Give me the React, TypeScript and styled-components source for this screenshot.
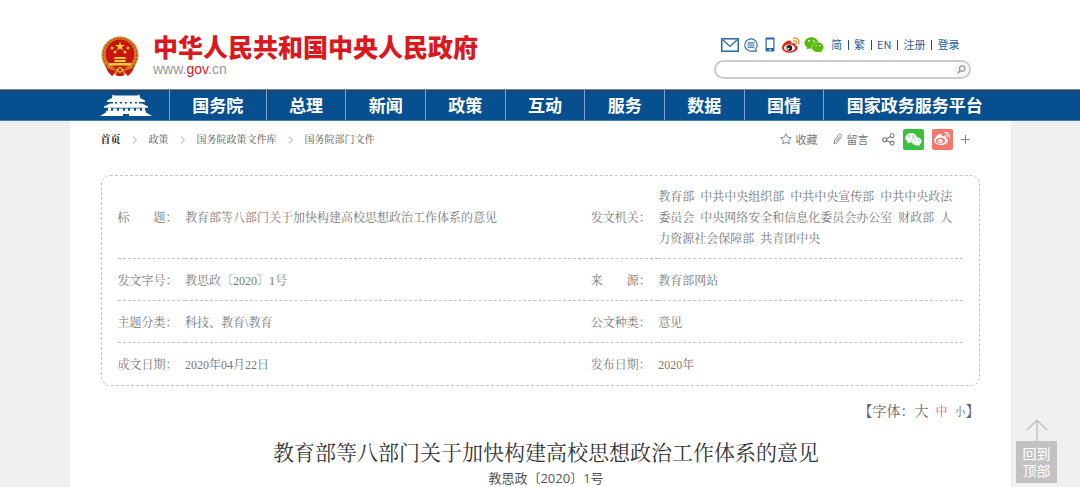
import React from 'react';
import styled, { createGlobalStyle } from 'styled-components';
import { FaWeixin, FaWeibo } from 'react-icons/fa';

const sans = '"Noto Sans CJK SC", sans-serif';
const song = '"Liberation Serif", "Noto Serif CJK SC", "Noto Sans CJK SC", serif';

const GlobalStyle = createGlobalStyle`
  * { box-sizing: border-box; }
  body { margin: 0; background: #fff; font-family: ${sans}; overflow-x: hidden; }
  a { color: inherit; text-decoration: none; }
  svg { display: block; flex: none; }
`;

const Header = styled.header`
  display: flex;
  justify-content: space-between;
  max-width: 940px;
  height: 89px;
  margin: 0 auto;
  padding: 34px 39px 0 31px;
`;
const Brand = styled.a`
  display: flex;
  align-items: flex-start;
  gap: 14px;
  svg { margin-top: 2px; }
`;
const BrandText = styled.div`
  display: flex;
  flex-direction: column;
  color: #d9191e;
`;
const BrandName = styled.strong`
  font: 900 25px/28px "Liberation Sans", ${sans};
  white-space: nowrap;
`;
const BrandUrl = styled.span`
  font: 14px/14px "Liberation Sans", sans-serif;
  color: #999;
  em { font-style: normal; color: #d9191e; }
`;
const Tools = styled.div`
  display: flex;
  flex-direction: column;
  gap: 7px;
  width: 257px;
  padding-top: 2px;
`;
const ToolLinks = styled.div`
  display: flex;
  align-items: center;
  height: 17px;
  padding-left: 7px;
  font-size: 11px;
  line-height: 17px;
  color: #1f5f9c;
  white-space: nowrap;
`;
const IconLink = styled.a<{ $gap: number }>`
  display: flex;
  margin-right: ${(p) => p.$gap}px;
`;
const Divider = styled.span`
  width: 1px;
  height: 10px;
  margin: 0 5px 0 6px;
  background: #1f4f80;
`;
const Search = styled.form`
  display: flex;
  align-items: center;
  height: 19px;
  border: 2px solid #ccc;
  border-radius: 10px;
  background: #fff;
`;
const SearchInput = styled.input`
  flex: 1;
  min-width: 0;
  height: 15px;
  padding: 0 8px;
  border: 0;
  outline: 0;
  background: transparent;
  font-size: 11px;
`;
const SearchButton = styled.button`
  display: grid;
  place-items: center;
  width: 16px;
  height: 15px;
  padding: 0;
  border: 0;
  border-radius: 8px;
  background: #f5f5f5;
`;

const NavBar = styled.nav`
  background: linear-gradient(#1b436b, #07508f 4px, #07508f);
  border-top: 1px solid #7d8a96;
  border-bottom: 1px solid #3f7fb8;
`;
const NavInner = styled.div`
  display: flex;
  max-width: 940px;
  height: 30px;
  margin: 0 auto;
  padding: 0 5px 0 30px;
`;
const NavHome = styled.a`
  display: flex;
  width: 69px;
  padding-top: 4px;
`;
const NavItem = styled.a`
  flex: 1 1 auto;
  border-left: 1px solid #7fa6cc;
  color: #fff;
  font-size: 17px;
  font-weight: 700;
  line-height: 30px;
  text-align: center;
  white-space: nowrap;
`;

const Backdrop = styled.div`
  background: #f0f0f0;
  min-height: calc(100vh - 121px);
`;
const Page = styled.main`
  max-width: 941px;
  min-height: calc(100vh - 121px);
  margin: 0 auto;
  padding: 0 31px;
  background: #fff;
`;
const TopRow = styled.div`
  display: flex;
  justify-content: space-between;
  align-items: center;
  height: 36px;
`;
const Crumbs = styled.nav`
  display: flex;
  align-items: center;
  gap: 11px;
  padding-top: 1px;
  font: 10px/20px ${song};
  color: #555;
  strong { color: #222; }
`;
const Actions = styled.div`
  display: flex;
  align-items: center;
  padding-right: 10px;
  font-size: 11px;
  color: #777;
`;
const Action = styled.button<{ $gap: number }>`
  display: flex;
  align-items: center;
  gap: 4px;
  margin: 0 ${(p) => p.$gap}px 0 0;
  padding: 0;
  border: 0;
  background: none;
  color: inherit;
  font: inherit;
`;
const Share = styled(Action)<{ $color: string }>`
  justify-content: center;
  width: 21px;
  height: 21px;
  border-radius: 2px;
  background: ${(p) => p.$color};
  color: #fff;
`;

const InfoBox = styled.section`
  margin-top: 18px;
  padding: 0 16px;
  border: 1px dashed #c4c4c4;
  border-radius: 9px;
`;
const InfoTable = styled.table`
  width: 100%;
  table-layout: fixed;
  border-collapse: collapse;
  font: 12px/21px ${song};
  color: #777;
  tr + tr { height: 42px; border-top: 1px dashed #c4c4c4; }
`;
const Label = styled.th`
  width: 8%;
  padding: 11px 0 8px;
  font-weight: 400;
  text-align: left;
  white-space: nowrap;
`;
const Value = styled.td<{ $width: number }>`
  width: ${(p) => p.$width}%;
  padding: 11px 0 8px;
`;

const FontSizer = styled.div`
  display: flex;
  justify-content: flex-end;
  align-items: center;
  margin-top: 16px;
  font: 14px/20px ${song};
  color: #666;
`;
const SizeButton = styled.button<{ $size: number; $active?: boolean }>`
  margin: 0 7px 0 0;
  padding: 0;
  border: 0;
  background: none;
  color: ${(p) => (p.$active ? '#ff3c86' : '#666')};
  font: ${(p) => p.$size}px/20px ${song};
  &:last-of-type { margin-right: 0; }
`;
const Article = styled.article`
  padding: 16px 0 0 12px;
  text-align: center;
`;
const Title = styled.h1`
  margin: 0;
  color: #333;
  font: 400 21px/30px ${song};
`;
const DocNumber = styled.p`
  margin: 0;
  color: #555;
  font: 13px/20px "Open Sans", ${sans};
`;
const BackToTop = styled.a`
  position: fixed;
  right: 23px;
  bottom: 4px;
  display: flex;
  flex-direction: column;
  align-items: center;
  color: #c2c2c2;
  span {
    width: 41px;
    padding: 4px 6px;
    background: #c2c2c2;
    color: #fff;
    font-size: 14px;
    line-height: 17px;
    text-align: center;
  }
`;

const Emblem = () => (
  <svg width="38" height="41" viewBox="0 0 38 41" aria-hidden="true">
    <circle cx="19" cy="19" r="18.5" fill="#cf8f2c" />
    <circle cx="19" cy="19" r="16.600" fill="none" stroke="#c0521e" strokeWidth="1.600" strokeDasharray="2 1.4" />
    <circle cx="19" cy="18" r="14.500" fill="#cb1212" />
    <path d="M19 5.500l1.200 3.500h3.600l-2.900 2.200 1.100 3.400-3-2.100-3 2.100 1.100-3.400-2.900-2.200h3.600z" fill="#f6cf2f" />
    <g fill="#f6cf2f">
      <circle cx="11" cy="12" r="1.500" /><circle cx="14" cy="16" r="1.500" />
      <circle cx="24" cy="16" r="1.500" /><circle cx="27" cy="12" r="1.500" />
      <path d="M14 21h10l1.500 2H12.500zM13.500 24h11v2h-11zM8 27h22v2.500H8z" />
    </g>
    <path d="M4 29q7 5 15 2.500q8 2.500 15-2.500l-3 7-4 4-3-3-2 3h-6l-2-3-3 3-4-4z" fill="#c51a14" />
    <path d="M6 31l8 3M32 31l-8 3M14 39l2-6M24 39l-2-6" stroke="#e2ae35" strokeWidth="1.300" fill="none" />
    <circle cx="19" cy="34" r="3" fill="#d6a12c" /><circle cx="19" cy="34" r="1.200" fill="#c51a14" />
  </svg>
);

const Gate = () => (
  <svg width="52" height="22" viewBox="0 0 52 22" fill="#fff" aria-hidden="true">
    <path d="M12.500 .5l2 1h23l2-1 .5 3.500 5 2.500v1.500H7V6.500L12 4z" />
    <path d="M13 8h2v2h-2zM17 8h3v2h-3zM22 8h3v2h-3zM27 8h3v2h-3zM32 8h3v2h-3zM37 8h2v2h-2z" />
    <path d="M10 9.500h32l6 3v1.200H4v-1.200z" />
    <path d="M8 13.700h3V17H8zM13 14.500h4V17h-4zM19 14.500h4V17h-4zM25 14.500h3V17h-3zM30 14.500h4V17h-4zM36 14.500h4V17h-4zM42 13.700h3V17h-3z" />
    <path d="M6 16.800h40v1.700l6 3.500H29v-2h-6v2H0l6-3.500z" />
  </svg>
);

const MailIcon = () => (
  <svg width="18" height="14" viewBox="0 0 18 14" fill="none" stroke="#2368a5" strokeWidth="1.500">
    <rect x=".8" y=".8" width="16.400" height="12.400" /><path d="M2 2l7 6.500L16 2" strokeWidth="1.200" />
  </svg>
);
const ChatIcon = () => (
  <svg width="14" height="14" viewBox="0 0 14 14" fill="none" stroke="#2f70aa" strokeWidth="1.200">
    <path d="M13.200 7A6.200 6.200 0 1 0 7 13.200h5.200l-.6-2A6.200 6.200 0 0 0 13.200 7z" /><path d="M3.500 4.800h7M3.500 7h7M3.500 9.200h7" />
  </svg>
);
const PhoneIcon = () => (
  <svg width="10" height="15" viewBox="0 0 10 15">
    <rect x=".5" y=".5" width="9" height="14" rx="1" fill="#2368a5" /><path d="M1.700 2.500h6.600v8.500H1.700z" fill="#fff" />
    <circle cx="5" cy="12.800" r=".9" fill="#fff" />
  </svg>
);
const WeiboColor = () => (
  <svg width="18" height="16" viewBox="0 0 18 16">
    <path d="M7 3.500C3.500 4 0 7.500 0 10.700 0 13.800 3.800 15.800 7.500 15.800c4.600 0 8.200-2.600 8.200-5 0-1.600-1.300-2.300-2.500-2.600.7-2-.8-3-3.800-1.800.5-2-.5-3.100-2.400-2.900z" fill="#dc2a25" />
    <ellipse cx="7.500" cy="10.900" rx="5.500" ry="3.500" fill="#fff" />
    <circle cx="7.300" cy="11" r="2.900" fill="#222" /><circle cx="6.300" cy="11.700" r="1" fill="#fff" />
    <path d="M11.500 1.200C15 .4 17.700 3 16.800 6.800M12 3.900c1.800-.3 2.700.7 2.300 2.300" fill="none" stroke="#ef9a3c" strokeWidth="1.500" strokeLinecap="round" />
  </svg>
);
const SearchIcon = () => (
  <svg width="9" height="9" viewBox="0 0 9 9" fill="none" stroke="#999" strokeWidth="1.200">
    <circle cx="5.200" cy="3.600" r="2.700" /><path d="M3.200 5.500L.8 8.200" strokeWidth="1.600" />
  </svg>
);
const Chevron = () => (
  <svg width="6" height="8" viewBox="0 0 6 8" fill="none" stroke="#aaa"><path d="M1 .8L4.500 4 1 7.200" /></svg>
);
const StarIcon = () => (
  <svg width="12" height="12" viewBox="0 0 12 12" fill="none" stroke="#888" strokeLinejoin="round">
    <path d="M6 .8l1.600 3.400 3.700.5-2.700 2.600.7 3.700L6 9.200 2.700 11l.7-3.700L.7 4.700l3.700-.5z" />
  </svg>
);
const PencilIcon = () => (
  <svg width="10" height="12" viewBox="0 0 10 12" fill="none" stroke="#888" strokeLinejoin="round">
    <path d="M1.200 10.800l.4-3.500L6 1.300c.9-1 3.400.7 2.700 2L4.300 9.300zM6.800 3.500L3.300 8.300" />
  </svg>
);
const ShareIcon = () => (
  <svg width="13" height="13" viewBox="0 0 13 13" fill="none" stroke="#777" strokeWidth="1.100">
    <circle cx="2.700" cy="6.800" r="2" /><circle cx="10.200" cy="2.700" r="1.900" /><circle cx="10.200" cy="10.300" r="1.900" />
    <path d="M4.500 5.800l4-2.200M4.500 7.600l4 1.900" />
  </svg>
);
const PlusIcon = () => (
  <svg width="9" height="9" viewBox="0 0 9 9" stroke="#888"><path d="M4.500 0v9M0 4.500h9" /></svg>
);
const ArrowUp = () => (
  <svg width="22" height="22" viewBox="0 0 22 22" fill="none" stroke="currentColor" strokeWidth="1.500">
    <path d="M11 22V1.500M.8 11.200L11 1.200l10.200 10" />
  </svg>
);

const navItems = ['国务院', '总理', '新闻', '政策', '互动', '服务', '数据', '国情', '国家政务服务平台'];
const languages = ['简', '繁', 'EN', '注册', '登录'];
const crumbs = ['首页', '政策', '国务院政策文件库', '国务院部门文件'];
const agencies = ['教育部', '中共中央组织部', '中共中央宣传部', '中共中央政法委员会', '中央网络安全和信息化委员会办公室', '财政部', '人力资源社会保障部', '共青团中央'];
const rows = [
  ['标\u3000\u3000题：', '教育部等八部门关于加快构建高校思想政治工作体系的意见', '发文机关：', agencies.join('\u2002')],
  ['发文字号：', '教思政〔2020〕1号', '来\u3000\u3000源：', '教育部网站'],
  ['主题分类：', '科技、教育\\教育', '公文种类：', '意见'],
  ['成文日期：', '2020年04月22日', '发布日期：', '2020年'],
];

export default function App() {
  return (
    <>
      <GlobalStyle />
      <Header>
        <Brand href="#">
          <Emblem />
          <BrandText>
            <BrandName>中华人民共和国中央人民政府</BrandName>
            <BrandUrl>www.<em>gov</em>.cn</BrandUrl>
          </BrandText>
        </Brand>
        <Tools>
          <ToolLinks>
            <IconLink href="#" $gap={5} aria-label="邮箱"><MailIcon /></IconLink>
            <IconLink href="#" $gap={7} aria-label="消息"><ChatIcon /></IconLink>
            <IconLink href="#" $gap={7} aria-label="客户端"><PhoneIcon /></IconLink>
            <IconLink href="#" $gap={4} aria-label="微博"><WeiboColor /></IconLink>
            <IconLink href="#" $gap={7} aria-label="微信"><FaWeixin size={20} color="#58b80c" /></IconLink>
            {languages.map((name, i) => (
              <React.Fragment key={name}>
                {i > 0 && <Divider />}
                <a href="#">{name}</a>
              </React.Fragment>
            ))}
          </ToolLinks>
          <Search>
            <SearchInput type="text" aria-label="搜索" />
            <SearchButton type="button" aria-label="搜索"><SearchIcon /></SearchButton>
          </Search>
        </Tools>
      </Header>
      <NavBar>
        <NavInner>
          <NavHome href="#" aria-label="首页"><Gate /></NavHome>
          {navItems.map((name) => <NavItem href="#" key={name}>{name}</NavItem>)}
        </NavInner>
      </NavBar>
      <Backdrop>
        <Page>
          <TopRow>
            <Crumbs>
              {crumbs.map((name, i) => (
                <React.Fragment key={name}>
                  {i > 0 && <Chevron />}
                  <a href="#">{i === 0 ? <strong>{name}</strong> : name}</a>
                </React.Fragment>
              ))}
            </Crumbs>
            <Actions>
              <Action $gap={15}><StarIcon />收藏</Action>
              <Action $gap={13}><PencilIcon />留言</Action>
              <Action $gap={8} aria-label="分享"><ShareIcon /></Action>
              <Share $gap={8} $color="#3cbf3f" aria-label="微信"><FaWeixin size={17} /></Share>
              <Share $gap={8} $color="#f7786b" aria-label="微博"><FaWeibo size={16} /></Share>
              <Action $gap={0} aria-label="更多"><PlusIcon /></Action>
            </Actions>
          </TopRow>
          <InfoBox>
            <InfoTable>
              <tbody>
                {rows.map(([l1, v1, l2, v2]) => (
                  <tr key={l1}>
                    <Label scope="row">{l1}</Label>
                    <Value $width={48}>{v1}</Value>
                    <Label scope="row">{l2}</Label>
                    <Value $width={36}>{v2}</Value>
                  </tr>
                ))}
              </tbody>
            </InfoTable>
          </InfoBox>
          <FontSizer>
            【字体：
            <SizeButton $size={14}>大</SizeButton>
            <SizeButton $size={12} $active>中</SizeButton>
            <SizeButton $size={11}>小</SizeButton>
            】
          </FontSizer>
          <Article>
            <Title>教育部等八部门关于加快构建高校思想政治工作体系的意见</Title>
            <DocNumber>教思政〔2020〕1号</DocNumber>
          </Article>
        </Page>
      </Backdrop>
      <BackToTop href="#">
        <ArrowUp />
        <span>回到顶部</span>
      </BackToTop>
    </>
  );
}
